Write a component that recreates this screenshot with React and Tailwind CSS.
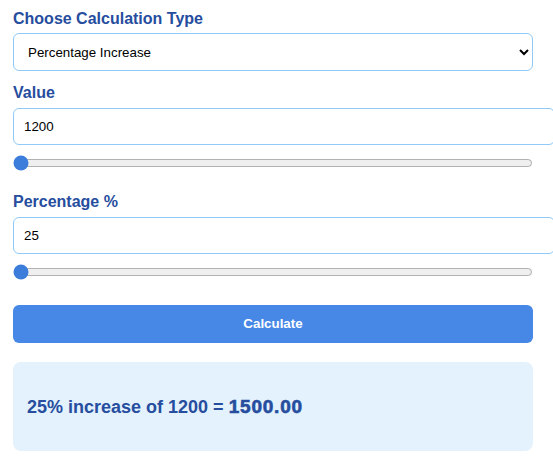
import React, { useState } from "react";

export default function App() {
  const [type, setType] = useState("increase");
  const [value, setValue] = useState("1200");
  const [pct, setPct] = useState("25");

  const labelCls =
    "block font-bold text-[16px] leading-[18px] text-[#264d9e]";
  const inputCls =
    "block box-content w-full px-[10px] py-[10px] h-[15px] text-[13.33px] leading-[15px] text-black bg-white border border-[#90caf9] rounded-[6px] outline-none";

  return (
    <div
      className="w-[520px] ml-[13px] pt-[10px] bg-white"
      style={{ fontFamily: '"Liberation Sans", Arial, sans-serif' }}
    >
      <label className={labelCls}>Choose Calculation Type</label>
      <select
        value={type}
        onChange={(e) => setType(e.target.value)}
        className="mt-[5px] block w-full h-[38px] px-[10px] text-[13.33px] text-black bg-white border border-[#90caf9] rounded-[6px] outline-none"
      >
        <option value="increase">Percentage Increase</option>
        <option value="decrease">Percentage Decrease</option>
        <option value="of">Percentage Of</option>
      </select>

      <label className={`${labelCls} mt-[13px]`}>Value</label>
      <input
        type="text"
        value={value}
        onChange={(e) => setValue(e.target.value)}
        className={`${inputCls} mt-[6px]`}
      />
      <input
        type="range"
        min="1200"
        max="100000"
        defaultValue="1200"
        className="block w-full mt-[10px] h-[16px] accent-[#3c7ddb]"
      />

      <label className={`${labelCls} mt-[22px]`}>Percentage %</label>
      <input
        type="text"
        value={pct}
        onChange={(e) => setPct(e.target.value)}
        className={`${inputCls} mt-[6px]`}
      />
      <input
        type="range"
        min="25"
        max="1000"
        defaultValue="25"
        className="block w-full mt-[10px] h-[16px] accent-[#3c7ddb]"
      />

      <button className="mt-[25px] block w-full h-[38px] rounded-[6px] bg-[#4788e6] text-white font-bold text-[13.33px]">
        Calculate
      </button>

      <div className="mt-[19px] h-[89px] rounded-[8px] bg-[#e3f2fd] px-[14px] pt-[2px] flex items-center">
        <p className="font-bold text-[18px] text-[#264d9e]">
          25% increase of 1200 ={" "}
          <span className="text-[19px] tracking-[0.8px] [-webkit-text-stroke:0.6px_#264d9e]">1500.00</span>
        </p>
      </div>
    </div>
  );
}
